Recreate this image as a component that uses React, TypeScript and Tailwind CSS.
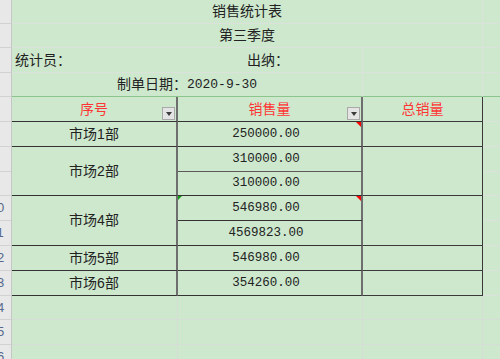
import React from 'react';

// only the two-digit row numbers peek out of the narrow gutter
const rowNums = ['', '', '', '', '', '', '', '', '10', '11', '12', '13', '14', '15', '16'];

const FilterButton = () => (
  <span className="absolute right-[1px] bottom-[1px] flex h-[13px] w-[13px] items-center justify-center border border-[#a9a9a9] bg-[#e4e4e4]">
    <span className="h-0 w-0 border-x-[3.5px] border-t-[4px] border-x-transparent border-t-[#3c3c3c]" />
  </span>
);

const RedMark = () => (
  <span className="absolute top-0 right-0 h-0 w-0 border-l-[5px] border-t-[5px] border-l-transparent border-t-[#f00]" />
);

const GreenMark = () => (
  <span className="absolute top-0 left-0 h-0 w-0 border-r-[4px] border-t-[4px] border-r-transparent border-t-[#169b16]" />
);

const Num = ({ v }: { v: string }) => (
  <span className="pr-[7px] font-['Liberation_Mono','Noto_Sans_CJK_SC',monospace] text-[12.5px]">{v}</span>
);

export default function App() {
  return (
    <div className="flex h-[359px] w-[500px] overflow-hidden bg-[#cde8cd] font-['Liberation_Sans','Noto_Sans_CJK_SC',sans-serif] text-[14px] text-[#222]">
      {/* row header gutter */}
      <div className="grid w-[12px] shrink-0 grid-rows-[24px_24px_25px_24px_25px_25px_25px_24px_25px_25px_25px_25px_24px_25px_25px] border-r border-[#c6c6c6] bg-[#e8e8e8]">
        {rowNums.map((n, i) => (
          <div key={i} className="flex items-center overflow-hidden border-b border-[#d2d2d2]">
            <div className="-ml-[18px] w-[30px] shrink-0 text-center text-[13px] text-[#56698a]">{n}</div>
          </div>
        ))}
      </div>

      <div className="grid grid-cols-[166px_185px_120px_17px] grid-rows-[24px_24px_25px_24px_25px_25px_25px_24px_25px_25px_25px_25px_24px_25px_25px]">
        {/* title block */}
        <div className="col-span-3 col-start-1 row-start-1 flex items-center justify-center border-r border-b border-[#dbe2db]">销售统计表</div>
        <div className="col-start-4 row-start-1 border-b border-[#dbe2db]" />
        <div className="col-span-3 col-start-1 row-start-2 flex items-center justify-center border-r border-b border-[#dbe2db]">第三季度</div>
        <div className="col-start-4 row-start-2 border-b border-[#dbe2db]" />

        <div className="col-span-2 col-start-1 row-start-3 flex items-center border-r border-b border-[#dbe2db]">
          <span className="w-[235px] shrink-0 pl-[3px]">统计员：</span>
          <span>出纳：</span>
        </div>
        <div className="col-start-3 row-start-3 border-r border-b border-[#dbe2db]" />
        <div className="col-start-4 row-start-3 border-b border-[#dbe2db]" />

        <div className="col-span-2 col-start-1 row-start-4 flex items-center justify-center border-r border-b border-r-[#dbe2db] border-b-[#8cc58c]">
          制单日期：<span className="font-['Liberation_Mono',monospace] text-[13px]">2020-9-30</span>
        </div>
        <div className="col-start-3 row-start-4 border-r border-b border-r-[#dbe2db] border-b-[#8cc58c]" />
        <div className="col-start-4 row-start-4 border-b border-[#8cc58c]" />

        {/* header */}
        <div className="relative col-start-1 row-start-5 flex items-center justify-center border-r-2 border-b border-r-[#6e6e6e] border-b-[#333] text-[#ff3535]">
          序号
          <FilterButton />
        </div>
        <div className="relative col-start-2 row-start-5 flex items-center justify-center border-r-2 border-b border-r-[#6e6e6e] border-b-[#333] text-[#ff3535]">
          销售量
          <FilterButton />
        </div>
        <div className="col-start-3 row-start-5 flex items-center justify-center border-r border-b border-[#3a3a3a] text-[#ff3535]">总销量</div>
        <div className="col-start-4 row-start-5 border-b border-[#dbe2db]" />

        {/* 市场1部 */}
        <div className="col-start-1 row-start-6 flex items-center justify-center border-r-2 border-b border-r-[#6e6e6e] border-b-[#333]">市场1部</div>
        <div className="relative col-start-2 row-start-6 flex items-center justify-center border-r-2 border-b border-r-[#6e6e6e] border-b-[#333]">
          <Num v="250000.00" />
          <RedMark />
        </div>
        <div className="col-start-3 row-start-6 border-r border-b border-[#3a3a3a]" />
        <div className="col-start-4 row-start-6 border-b border-[#dbe2db]" />

        {/* 市场2部 */}
        <div className="col-start-1 row-span-2 row-start-7 flex items-center justify-center border-r-2 border-b border-r-[#6e6e6e] border-b-[#333]">市场2部</div>
        <div className="col-start-2 row-start-7 flex items-center justify-center border-r-2 border-b border-r-[#6e6e6e] border-b-[#5a5a5a]">
          <Num v="310000.00" />
        </div>
        <div className="col-start-2 row-start-8 flex items-center justify-center border-r-2 border-b border-r-[#6e6e6e] border-b-[#333]">
          <Num v="310000.00" />
        </div>
        <div className="col-start-3 row-span-2 row-start-7 border-r border-b border-[#3a3a3a]" />
        <div className="col-start-4 row-start-7 border-b border-[#dbe2db]" />
        <div className="col-start-4 row-start-8 border-b border-[#dbe2db]" />

        {/* 市场4部 */}
        <div className="col-start-1 row-span-2 row-start-9 flex items-center justify-center border-r-2 border-b border-r-[#6e6e6e] border-b-[#333]">市场4部</div>
        <div className="relative col-start-2 row-start-9 flex items-center justify-center border-r-2 border-b border-r-[#6e6e6e] border-b-[#333]">
          <Num v="546980.00" />
          <GreenMark />
          <RedMark />
        </div>
        <div className="col-start-2 row-start-10 flex items-center justify-center border-r-2 border-b border-r-[#6e6e6e] border-b-[#333]">
          <Num v="4569823.00" />
        </div>
        <div className="col-start-3 row-span-2 row-start-9 border-r border-b border-[#3a3a3a]" />
        <div className="col-start-4 row-start-9 border-b border-[#dbe2db]" />
        <div className="col-start-4 row-start-10 border-b border-[#dbe2db]" />

        {/* 市场5部 */}
        <div className="col-start-1 row-start-11 flex items-center justify-center border-r-2 border-b border-r-[#6e6e6e] border-b-[#333]">市场5部</div>
        <div className="col-start-2 row-start-11 flex items-center justify-center border-r-2 border-b border-r-[#6e6e6e] border-b-[#333]">
          <Num v="546980.00" />
        </div>
        <div className="col-start-3 row-start-11 border-r border-b border-[#3a3a3a]" />
        <div className="col-start-4 row-start-11 border-b border-[#dbe2db]" />

        {/* 市场6部 */}
        <div className="col-start-1 row-start-12 flex items-center justify-center border-r-2 border-b border-r-[#6e6e6e] border-b-[#333]">市场6部</div>
        <div className="col-start-2 row-start-12 flex items-center justify-center border-r-2 border-b border-r-[#6e6e6e] border-b-[#333]">
          <Num v="354260.00" />
        </div>
        <div className="col-start-3 row-start-12 border-r border-b border-[#3a3a3a]" />
        <div className="col-start-4 row-start-12 border-b border-[#dbe2db]" />

        {/* empty rows below */}
        <div className="col-start-1 row-start-13 border-r border-b border-[#d6ddd6]" />
        <div className="col-start-2 row-start-13 border-r border-b border-[#d6ddd6]" />
        <div className="col-start-3 row-start-13 border-r border-b border-[#d6ddd6]" />
        <div className="col-start-4 row-start-13 border-b border-[#d6ddd6]" />
        <div className="col-start-1 row-start-14 border-r border-b border-[#d6ddd6]" />
        <div className="col-start-2 row-start-14 border-r border-b border-[#d6ddd6]" />
        <div className="col-start-3 row-start-14 border-r border-b border-[#d6ddd6]" />
        <div className="col-start-4 row-start-14 border-b border-[#d6ddd6]" />
        <div className="col-start-1 row-start-15 border-r border-b border-[#d6ddd6]" />
        <div className="col-start-2 row-start-15 border-r border-b border-[#d6ddd6]" />
        <div className="col-start-3 row-start-15 border-r border-b border-[#d6ddd6]" />
        <div className="col-start-4 row-start-15 border-b border-[#d6ddd6]" />
      </div>
    </div>
  );
}
